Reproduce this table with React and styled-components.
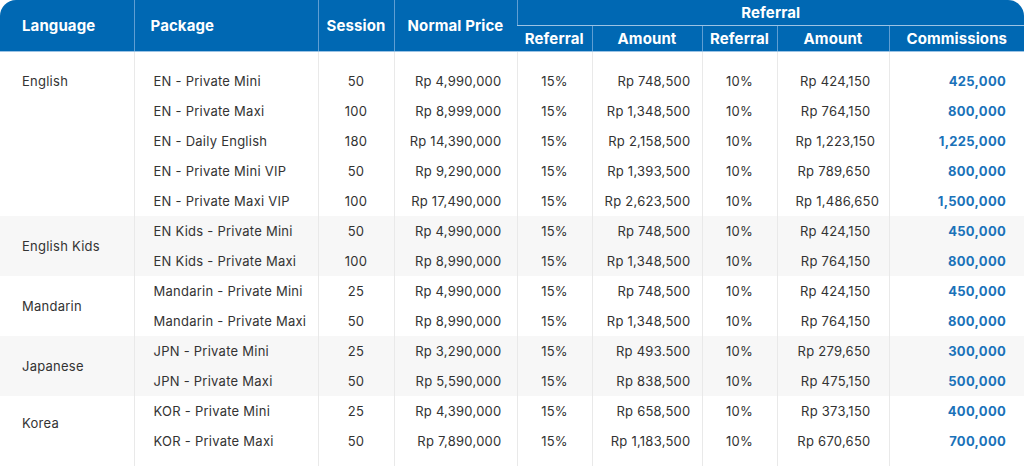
import React from "react";
import styled, { createGlobalStyle } from "styled-components";

const Global = createGlobalStyle`
  html, body { margin: 0; padding: 0; background: #ffffff; }
  body { font-family: Inter, "Noto Sans", Arial, sans-serif; color: #333; }
`;

const Wrapper = styled.div`
  width: 1024px;
  height: 466px;
  overflow: hidden;
  border-radius: 16px 16px 0 0;
  background: #fff;
`;

const Table = styled.table`
  width: 1024px;
  border-collapse: collapse;
  table-layout: fixed;
`;

const HeadCell = styled.th`
  background: #0068b3;
  color: #fff;
  font-weight: 700;
  font-size: 15px;
  letter-spacing: 0.1px;
  height: ${(p) => p.$h || 24}px;
  padding: 0 ${(p) => p.$pad ?? 2}px;
  text-align: ${(p) => p.$align || "center"};
  border-left: 1px solid #5f9ed3;
  border-bottom: 1px solid #9cc3e4;
  white-space: nowrap;
  &:first-child { border-left: none; }
`;

const Cell = styled.td`
  height: 30px;
  padding: 0 ${(p) => p.$pad ?? 0}px;
  font-size: 13px;
  letter-spacing: 0.25px;
  color: #333;
  text-align: ${(p) => p.$align || "center"};
  border-left: 1px solid #e9e9e9;
  white-space: nowrap;
  background: ${(p) => (p.$alt ? "#f7f7f7" : "#fff")};
`;

const CommCell = styled(Cell)`
  color: #1a72b9;
  font-weight: 700;
  letter-spacing: 0.3px;
`;

const LangCell = styled.td`
  padding: ${(p) => (p.$top ? "21px" : "0")} 0 ${(p) => p.$lift || 0}px 22px;
  vertical-align: ${(p) => (p.$top ? "top" : "middle")};
  font-size: 13px;
  letter-spacing: 0.25px;
  color: #333;
  white-space: nowrap;
  line-height: 16px;
  background: ${(p) => (p.$alt ? "#f7f7f7" : "#fff")};
`;

const Spacer = styled.td`
  height: ${(p) => p.$h}px;
  padding: 0;
  border-left: 1px solid #e9e9e9;
  &:first-child { border-left: none; }
`;

const widths = [134, 184, 76, 123, 75, 110, 75, 112, 135];

const groups = [
  {
    lang: "English",
    top: true,
    rows: [
      ["EN - Private Mini", "50", "Rp 4,990,000", "Rp 748,500", "Rp 424,150", "425,000"],
      ["EN - Private Maxi", "100", "Rp 8,999,000", "Rp 1,348,500", "Rp 764,150", "800,000"],
      ["EN - Daily English", "180", "Rp 14,390,000", "Rp 2,158,500", "Rp 1,223,150", "1,225,000"],
      ["EN - Private Mini VIP", "50", "Rp 9,290,000", "Rp 1,393,500", "Rp 789,650", "800,000"],
      ["EN - Private Maxi VIP", "100", "Rp 17,490,000", "Rp 2,623,500", "Rp 1,486,650", "1,500,000"],
    ],
  },
  {
    lang: "English Kids",
    alt: true,
    rows: [
      ["EN Kids - Private Mini", "50", "Rp 4,990,000", "Rp 748,500", "Rp 424,150", "450,000"],
      ["EN Kids - Private Maxi", "100", "Rp 8,990,000", "Rp 1,348,500", "Rp 764,150", "800,000"],
    ],
  },
  {
    lang: "Mandarin",
    rows: [
      ["Mandarin - Private Mini", "25", "Rp 4,990,000", "Rp 748,500", "Rp 424,150", "450,000"],
      ["Mandarin - Private Maxi", "50", "Rp 8,990,000", "Rp 1,348,500", "Rp 764,150", "800,000"],
    ],
  },
  {
    lang: "Japanese",
    alt: true,
    rows: [
      ["JPN - Private Mini", "25", "Rp 3,290,000", "Rp 493.500", "Rp 279,650", "300,000"],
      ["JPN - Private Maxi", "50", "Rp 5,590,000", "Rp 838,500", "Rp 475,150", "500,000"],
    ],
  },
  {
    lang: "Korea",
    lift: 6,
    rows: [
      ["KOR - Private Mini", "25", "Rp 4,390,000", "Rp 658,500", "Rp 373,150", "400,000"],
      ["KOR - Private Maxi", "50", "Rp 7,890,000", "Rp 1,183,500", "Rp 670,650", "700,000"],
    ],
  },
];

function SpacerRow({ h }) {
  return (
    <tr>
      {widths.map((_, i) => (
        <Spacer key={i} $h={h} />
      ))}
    </tr>
  );
}

export default function App() {
  return (
    <>
      <Global />
      <Wrapper>
        <Table>
          <colgroup>
            {widths.map((w, i) => (
              <col key={i} style={{ width: w }} />
            ))}
          </colgroup>
          <thead>
            <tr>
              <HeadCell rowSpan={2} $align="left" $pad={22}>Language</HeadCell>
              <HeadCell rowSpan={2} $align="left" $pad={16}>Package</HeadCell>
              <HeadCell rowSpan={2}>Session</HeadCell>
              <HeadCell rowSpan={2}>Normal Price</HeadCell>
              <HeadCell colSpan={5} $h={25}>Referral</HeadCell>
            </tr>
            <tr>
              <HeadCell $h={25}>Referral</HeadCell>
              <HeadCell $h={25}>Amount</HeadCell>
              <HeadCell $h={25}>Referral</HeadCell>
              <HeadCell $h={25}>Amount</HeadCell>
              <HeadCell $h={25}>Commissions</HeadCell>
            </tr>
          </thead>
          <tbody>
            {groups.map((g) =>
              g.rows.map((r, i) => (
                <React.Fragment key={g.lang + i}>
                  {g.top && i === 0 && (
                    <tr>
                      <LangCell rowSpan={g.rows.length + 1} $top>
                        {g.lang}
                      </LangCell>
                      {widths.slice(1).map((_, k) => (
                        <Spacer key={k} $h={14} />
                      ))}
                    </tr>
                  )}
                  <tr>
                    {!g.top && i === 0 && (
                      <LangCell rowSpan={g.rows.length} $alt={g.alt} $lift={g.lift}>
                        {g.lang}
                      </LangCell>
                    )}
                    <Cell $align="left" $pad={19} $alt={g.alt}>{r[0]}</Cell>
                    <Cell $alt={g.alt}>{r[1]}</Cell>
                    <Cell $align="right" $pad={15} $alt={g.alt}>{r[2]}</Cell>
                    <Cell $alt={g.alt}>15%</Cell>
                    <Cell $align="right" $pad={11} $alt={g.alt}>{r[3]}</Cell>
                    <Cell $alt={g.alt}>10%</Cell>
                    <Cell $align="right" $pad={18} $alt={g.alt}>{r[4]}</Cell>
                    <CommCell $align="right" $pad={18} $alt={g.alt}>{r[5]}</CommCell>
                  </tr>
                </React.Fragment>
              ))
            )}
            <SpacerRow h={12} />
          </tbody>
        </Table>
      </Wrapper>
    </>
  );
}
